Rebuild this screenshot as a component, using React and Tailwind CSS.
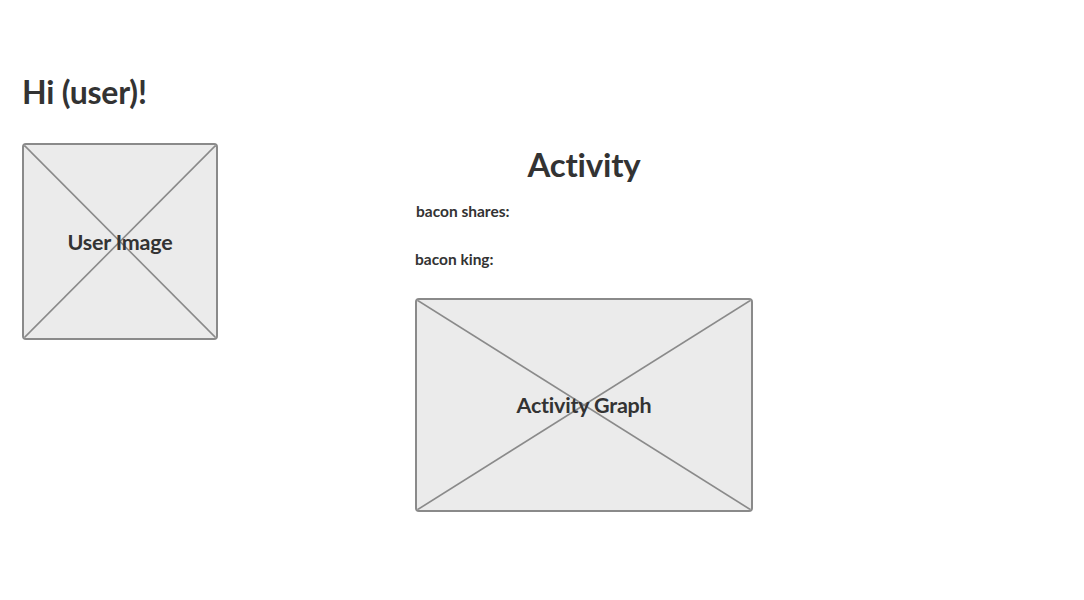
const Placeholder = ({ label, className }) => {
  return (
    <div className={`relative flex items-center justify-center bg-[#ebebeb] border-2 border-[#8a8a8a] rounded-[4px] overflow-hidden ${className}`}>
      <svg className="absolute inset-0 w-full h-full" viewBox="0 0 100 100" preserveAspectRatio="none">
        <line x1="0" y1="0" x2="100" y2="100" stroke="#8a8a8a" strokeWidth="1.6" vectorEffect="non-scaling-stroke" />
        <line x1="100" y1="0" x2="0" y2="100" stroke="#8a8a8a" strokeWidth="1.6" vectorEffect="non-scaling-stroke" />
      </svg>
      <span className="relative text-[21.5px] leading-[28px] font-bold text-[#333333] tracking-[-0.2px]">{label}</span>
    </div>
  );
};

const App = () => {
  return (
    <div className="w-[1084px] h-[600px] bg-white font-['Lato','Liberation_Sans',sans-serif] text-[#333333]">
      <div className="flex pt-[74px] pl-[22px]">
        <div className="w-[196px] shrink-0">
          <h1 className="text-[32px] leading-[36px] font-bold tracking-[-0.2px] whitespace-nowrap">Hi (user)!</h1>
          <Placeholder label="User Image" className="mt-[33px] w-[196px] h-[197px]" />
        </div>

        <div className="ml-[197px] w-[338px] shrink-0 pt-[72px]">
          <h2 className="text-[33px] leading-[36px] font-bold text-center tracking-[-0.2px]">Activity</h2>
          <div className="mt-[19px] pl-px text-[15.5px] leading-[20px] font-bold">bacon shares:</div>
          <div className="mt-[28px] text-[15.5px] leading-[20px] font-bold">bacon king:</div>
          <Placeholder label="Activity Graph" className="mt-[29px] w-[338px] h-[214px]" />
        </div>
      </div>
    </div>
  );
};

export default App;
